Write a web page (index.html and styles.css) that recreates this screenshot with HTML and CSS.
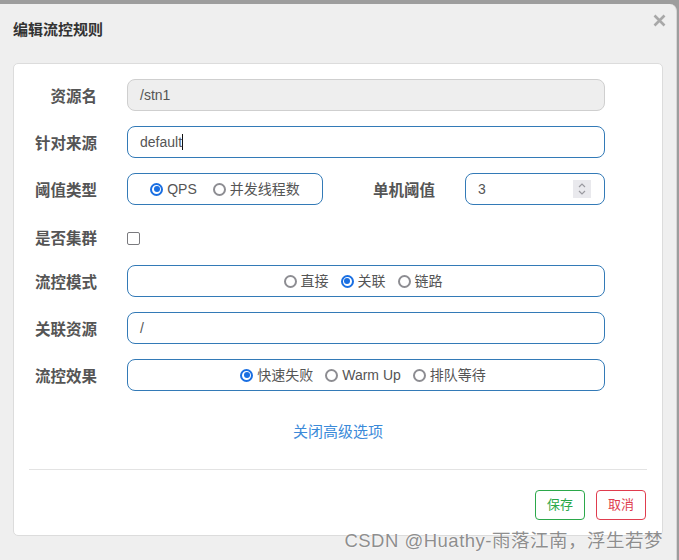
FILE: index.html
```html
<!DOCTYPE html>
<html lang="zh-CN">
<head>
<meta charset="utf-8">
<title>编辑流控规则</title>
<link rel="stylesheet" href="styles.css">
</head>
<body>
<div class="dialog">
  <div class="dlg-head">
    <h4 class="dlg-title">编辑流控规则</h4>
    <span class="close" aria-label="关闭">
      <svg width="13" height="13" viewBox="0 0 13 13"><path d="M1.5 1.5 L11.5 11.5 M11.5 1.5 L1.5 11.5" stroke="#a8a8a8" stroke-width="2.6" fill="none"/></svg>
    </span>
  </div>
  <div class="panel">
    <div class="form">
      <div class="row">
        <label class="lbl">资源名</label>
        <div class="field disabled">/stn1</div>
      </div>
      <div class="row">
        <label class="lbl">针对来源</label>
        <div class="field"><span class="caret">default</span></div>
      </div>
      <div class="row">
        <label class="lbl">阈值类型</label>
        <div class="split">
          <div class="radios narrow">
            <span class="opt"><span class="radio on"></span>QPS</span>
            <span class="opt"><span class="radio"></span>并发线程数</span>
          </div>
          <label class="lbl sub">单机阈值</label>
          <div class="field num"><span class="val">3</span>
            <span class="spin"><svg width="10" height="14" viewBox="0 0 10 14"><path d="M2 5 L5 2 L8 5 M2 9 L5 12 L8 9" stroke="#9a9aa0" stroke-width="1.2" fill="none"/></svg></span>
          </div>
        </div>
      </div>
      <div class="row check-row">
        <label class="lbl">是否集群</label>
        <div class="ctl-check"><span class="checkbox"></span></div>
      </div>
      <div class="row">
        <label class="lbl">流控模式</label>
        <div class="radios">
          <span class="opt"><span class="radio"></span>直接</span>
          <span class="opt"><span class="radio on"></span>关联</span>
          <span class="opt"><span class="radio"></span>链路</span>
        </div>
      </div>
      <div class="row">
        <label class="lbl">关联资源</label>
        <div class="field">/</div>
      </div>
      <div class="row">
        <label class="lbl">流控效果</label>
        <div class="radios">
          <span class="opt"><span class="radio on"></span>快速失败</span>
          <span class="opt"><span class="radio"></span>Warm Up</span>
          <span class="opt"><span class="radio"></span>排队等待</span>
        </div>
      </div>
    </div>
    <div class="more"><a class="link">关闭高级选项</a></div>
    <hr class="sep">
    <div class="actions">
      <button class="btn ok">保存</button>
      <button class="btn cancel">取消</button>
    </div>
  </div>
</div>
<div class="watermark">CSDN @Huathy-雨落江南，浮生若梦</div>
</body>
</html>
```

FILE: styles.css
```css
* { box-sizing: border-box; }
html, body {
  margin: 0;
  padding: 0;
  height: 560px;
  overflow: hidden;
}
body {
  background: #9d9d9d;
  font-family: "Liberation Sans", "Noto Sans CJK SC", sans-serif;
  color: #555;
  position: relative;
  padding-top: 4px;
}
.dialog {
  width: 677px;
  height: 560px;
  background: #efefef;
  border-top-right-radius: 7px;
  padding: 0 14px 0 13px;
  border-right: 1px solid #d6d6d6;
}
.dlg-head {
  display: flex;
  justify-content: space-between;
  align-items: flex-start;
  padding: 15px 0 22px 0;
}
.dlg-title {
  margin: 0;
  font-size: 15px;
  line-height: 22px;
  font-weight: bold;
  color: #333;
}
.close {
  display: block;
  width: 13px;
  height: 13px;
  margin-top: -5px;
  margin-right: -4px;
}
.close svg { display: block; }
.panel {
  width: 650px;
  background: #fff;
  border: 1px solid #dcdcdc;
  border-radius: 5px;
  padding: 15px 15px 15px 15px;
}
.form {
  display: flex;
  flex-direction: column;
  gap: 15px;
}
.row {
  display: grid;
  grid-template-columns: 68px 478px;
  column-gap: 30px;
  align-items: center;
  height: 32px;
}
.lbl {
  font-size: 15.5px;
  font-weight: bold;
  color: #555;
  text-align: right;
  white-space: nowrap;
  line-height: 20px;
  padding-top: 3px;
}
.field {
  height: 32px;
  border: 1px solid #337ab7;
  border-radius: 8px;
  padding: 0 12px;
  font-size: 14px;
  line-height: 30px;
  color: #555;
  background: #fff;
}
.field.disabled {
  background: #eeeeee;
  border-color: #cfcfcf;
}
.caret {
  border-right: 1px solid #111;
  padding-right: 0;
}
.split {
  display: flex;
  align-items: center;
  gap: 30px;
}
.radios {
  height: 32px;
  border: 1px solid #337ab7;
  border-radius: 8px;
  display: flex;
  align-items: center;
  justify-content: center;
  gap: 12px;
  font-size: 14px;
  color: #555;
  padding-right: 6px;
}
.radios.narrow {
  width: 196px;
  flex: none;
  gap: 16px;
  padding-right: 0;
}
.split .sub { flex: 1; }
.field.num {
  width: 140px;
  flex: none;
  display: flex;
  align-items: center;
  justify-content: space-between;
  padding-right: 13px;
}
.spin {
  width: 18px;
  height: 18px;
  background: #e9e9ed;
  display: flex;
  align-items: center;
  justify-content: center;
}
.spin svg { display: block; }
.opt {
  display: inline-flex;
  align-items: center;
  gap: 4px;
  line-height: 20px;
  white-space: nowrap;
}
.radio {
  width: 13px;
  height: 13px;
  border-radius: 50%;
  border: 2px solid #8d8d92;
  background: #fff;
  display: inline-block;
  position: relative;
  flex: none;
}
.radio.on {
  border-color: #1a6fe2;
}
.radio.on::after {
  content: "";
  position: absolute;
  left: 1.5px;
  top: 1.5px;
  width: 6px;
  height: 6px;
  border-radius: 50%;
  background: #1a6fe2;
}
.check-row {
  height: 26px;
  margin-top: 4px;
}
.ctl-check {
  display: flex;
  align-items: center;
  padding-top: 3px;
}
.checkbox {
  width: 13px;
  height: 13px;
  border: 1.5px solid #7a7a7e;
  border-radius: 2px;
  display: block;
}
.more {
  text-align: center;
  margin-top: 30px;
  line-height: 22px;
  font-size: 15px;
}
.link {
  color: #3b8ad9;
  text-decoration: none;
}
.sep {
  border: 0;
  border-top: 1px solid #e3e3e3;
  margin: 26px 0 0 0;
  height: 0;
}
.actions {
  display: flex;
  justify-content: flex-end;
  gap: 11px;
  margin-top: 20px;
  padding-right: 1px;
}
.btn {
  width: 50px;
  height: 30px;
  background: #fff;
  border: 1px solid;
  border-radius: 4px;
  font-family: "Liberation Sans", "Noto Sans CJK SC", sans-serif;
  font-size: 13px;
  padding: 0;
  line-height: 28px;
}
.btn.ok { border-color: #2ba84a; color: #2ba84a; }
.btn.cancel { border-color: #e03c4e; color: #e03c4e; }
.watermark {
  position: absolute;
  right: 16px;
  top: 529px;
  font-size: 18.5px;
  letter-spacing: 0.5px;
  line-height: 24px;
  color: #8e8e8e;
  text-shadow: 0 0 2px #fff, 0 0 1px #fff;
  white-space: nowrap;
}
```
